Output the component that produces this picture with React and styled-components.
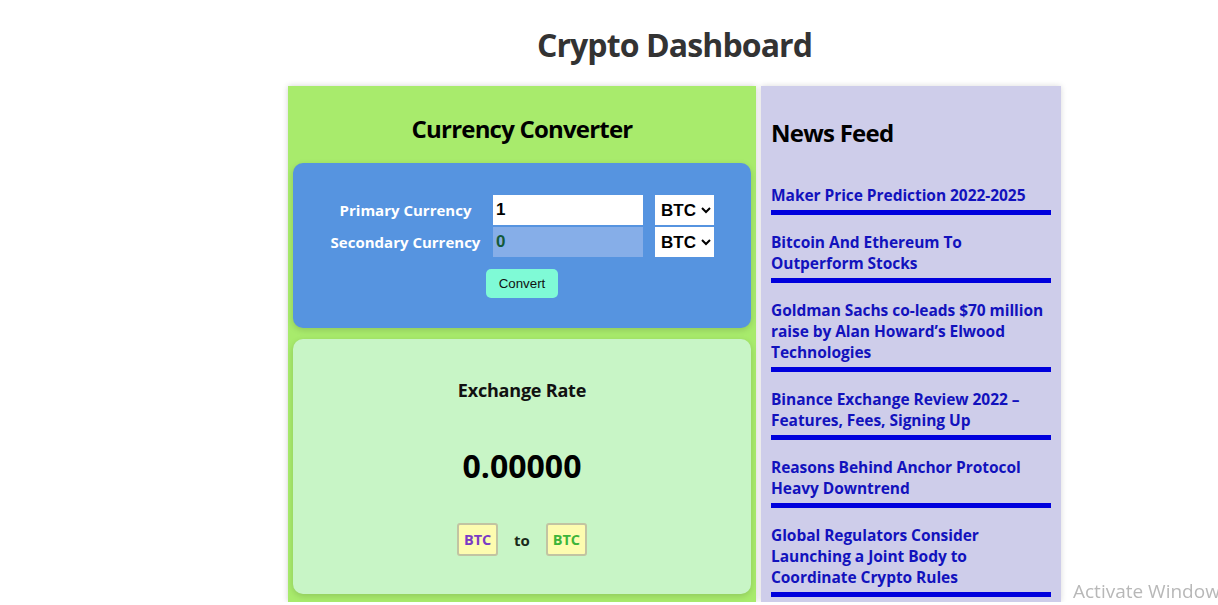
import React, { useState } from "react";
import styled, { createGlobalStyle } from "styled-components";

const FONT = `"Open Sans", "Noto Sans", sans-serif`;

const news = [
  "Maker Price Prediction 2022-2025",
  "Bitcoin And Ethereum To Outperform Stocks",
  "Goldman Sachs co-leads $70 million raise by Alan Howard’s Elwood Technologies",
  "Binance Exchange Review 2022 – Features, Fees, Signing Up",
  "Reasons Behind Anchor Protocol Heavy Downtrend",
  "Global Regulators Consider Launching a Joint Body to Coordinate Crypto Rules",
];

const currencies = ["BTC", "ETH", "USDT", "XRP", "ADA"];

export default function App() {
  const [amount, setAmount] = useState("1");
  const [primary, setPrimary] = useState("BTC");
  const [secondary, setSecondary] = useState("BTC");

  return (
    <>
      <GlobalStyle />
      <Page>
        <Title>Crypto Dashboard</Title>
        <Dashboard>
          <ConverterPanel>
            <PanelTitle>Currency Converter</PanelTitle>
            <InputBox>
              <Form>
                <Label>Primary Currency</Label>
                <AmountInput
                  type="number"
                  value={amount}
                  onChange={(e) => setAmount(e.target.value)}
                />
                <CurrencySelect value={primary} onChange={(e) => setPrimary(e.target.value)}>
                  {currencies.map((c) => (
                    <option key={c}>{c}</option>
                  ))}
                </CurrencySelect>
                <Label>Secondary Currency</Label>
                <AmountInput $result value="0" disabled />
                <CurrencySelect value={secondary} onChange={(e) => setSecondary(e.target.value)}>
                  {currencies.map((c) => (
                    <option key={c}>{c}</option>
                  ))}
                </CurrencySelect>
              </Form>
              <ConvertButton>Convert</ConvertButton>
            </InputBox>
            <RateBox>
              <RateTitle>Exchange Rate</RateTitle>
              <RateValue>0.00000</RateValue>
              <Pair>
                <Tag $color="#7a3cc4">{primary}</Tag>
                <To>to</To>
                <Tag $color="#3db53a">{secondary}</Tag>
              </Pair>
            </RateBox>
          </ConverterPanel>
          <NewsPanel>
            <NewsTitle>News Feed</NewsTitle>
            {news.map((n) => (
              <NewsItem key={n}>
                <NewsLink href="#">{n}</NewsLink>
              </NewsItem>
            ))}
          </NewsPanel>
        </Dashboard>
      </Page>
      <Watermark>Activate Windows</Watermark>
    </>
  );
}

const GlobalStyle = createGlobalStyle`
  body {
    margin: 0;
    background: #fff;
    font-family: ${FONT};
    overflow-x: hidden;
  }
`;

const Page = styled.div`
  width: 773px;
  margin-left: 288px;
`;

const Title = styled.h1`
  margin: 0;
  height: 86px;
  box-sizing: border-box;
  padding-top: 24px;
  text-align: center;
  font-size: 32px;
  line-height: 42px;
  letter-spacing: -0.9px;
  font-weight: 700;
  color: #333;
`;

const Dashboard = styled.div`
  display: flex;
  gap: 5px;
  align-items: stretch;
`;

const ConverterPanel = styled.div`
  width: 468px;
  box-sizing: border-box;
  padding: 0 5px 5px;
  background: #a8eb6c;
  box-shadow: 0 0 6px rgba(0, 0, 0, 0.18);
`;

const PanelTitle = styled.h2`
  margin: 27px 0 18px;
  text-align: center;
  font-size: 24px;
  line-height: 32px;
  letter-spacing: -0.8px;
  font-weight: 700;
  color: #000;
`;

const InputBox = styled.div`
  height: 165px;
  box-sizing: border-box;
  padding-top: 32px;
  border-radius: 10px;
  background: #5694e0;
  box-shadow: 0 2px 6px rgba(0, 0, 0, 0.15);
  display: flex;
  flex-direction: column;
  align-items: center;
  gap: 12px;
`;

const Form = styled.div`
  display: grid;
  grid-template-columns: 151px 150px 59px;
  column-gap: 12px;
  row-gap: 2px;
  align-items: center;
`;

const Label = styled.label`
  text-align: center;
  color: #fff;
  font-size: 15px;
  font-weight: 700;
  white-space: nowrap;
`;

const AmountInput = styled.input`
  width: 150px;
  height: 30px;
  box-sizing: border-box;
  border: none;
  padding: 0 3px;
  outline: none;
  font-family: "Liberation Sans", Arial, sans-serif;
  font-size: 17px;
  font-weight: 700;
  background: ${(p) => (p.$result ? "#86aee8" : "#fff")};
  color: ${(p) => (p.$result ? "#135a3a" : "#000")};
  -moz-appearance: textfield;
  &::-webkit-inner-spin-button,
  &::-webkit-outer-spin-button {
    -webkit-appearance: none;
    margin: 0;
  }
`;

const CurrencySelect = styled.select`
  width: 59px;
  height: 30px;
  border: none;
  border-radius: 0;
  background: #fff;
  color: #000;
  font-family: "Liberation Sans", Arial, sans-serif;
  font-size: 17px;
  font-weight: 700;
  padding: 0 2px;
  outline: none;
`;

const ConvertButton = styled.button`
  width: 72px;
  height: 29px;
  border: none;
  border-radius: 5px;
  background: #7ffad6;
  color: #111;
  font-family: "Liberation Sans", Arial, sans-serif;
  font-size: 13.3px;
  cursor: pointer;
`;

const RateBox = styled.div`
  margin-top: 11px;
  height: 255px;
  box-sizing: border-box;
  padding-top: 38px;
  border-radius: 10px;
  background: #c8f5c6;
  box-shadow: 0 2px 6px rgba(0, 0, 0, 0.15);
  display: flex;
  flex-direction: column;
  align-items: center;
`;

const RateTitle = styled.h3`
  margin: 0;
  font-size: 18px;
  line-height: 26px;
  letter-spacing: -0.2px;
  font-weight: 700;
  color: #111;
`;

const RateValue = styled.h1`
  margin: 42px 0 0;
  font-size: 32px;
  line-height: 42px;
  font-weight: 700;
  color: #000;
`;

const Pair = styled.div`
  margin-top: 36px;
  display: flex;
  align-items: center;
  gap: 16px;
`;

const Tag = styled.span`
  width: 41px;
  height: 33px;
  box-sizing: border-box;
  display: flex;
  align-items: center;
  justify-content: center;
  border: 2px solid #c2c4a2;
  border-radius: 3px;
  background: #fdfcb0;
  color: ${(p) => p.$color};
  font-size: 14.5px;
  font-weight: 700;
`;

const To = styled.span`
  font-size: 15px;
  font-weight: 700;
  color: #1a2a1a;
`;

const NewsPanel = styled.div`
  width: 300px;
  box-sizing: border-box;
  padding: 11px 10px 5px;
  background: #cecdea;
  box-shadow: 0 0 6px rgba(0, 0, 0, 0.15);
`;

const NewsTitle = styled.h2`
  margin: 20px 0 36px;
  font-size: 24px;
  line-height: 32px;
  letter-spacing: -0.75px;
  font-weight: 700;
  color: #000;
`;

const NewsItem = styled.p`
  margin: 17px 0 0;
  padding-bottom: 4px;
  border-bottom: 5px solid #0000dd;
  font-size: 15.5px;
  line-height: 21px;
  letter-spacing: -0.05px;
`;

const NewsLink = styled.a`
  color: #1212bd;
  font-weight: 700;
  text-decoration: none;
`;

const Watermark = styled.div`
  position: fixed;
  left: 1073px;
  top: 578px;
  white-space: nowrap;
  font-family: ${FONT};
  font-size: 19px;
  color: #b8b8b8;
  pointer-events: none;
`;
